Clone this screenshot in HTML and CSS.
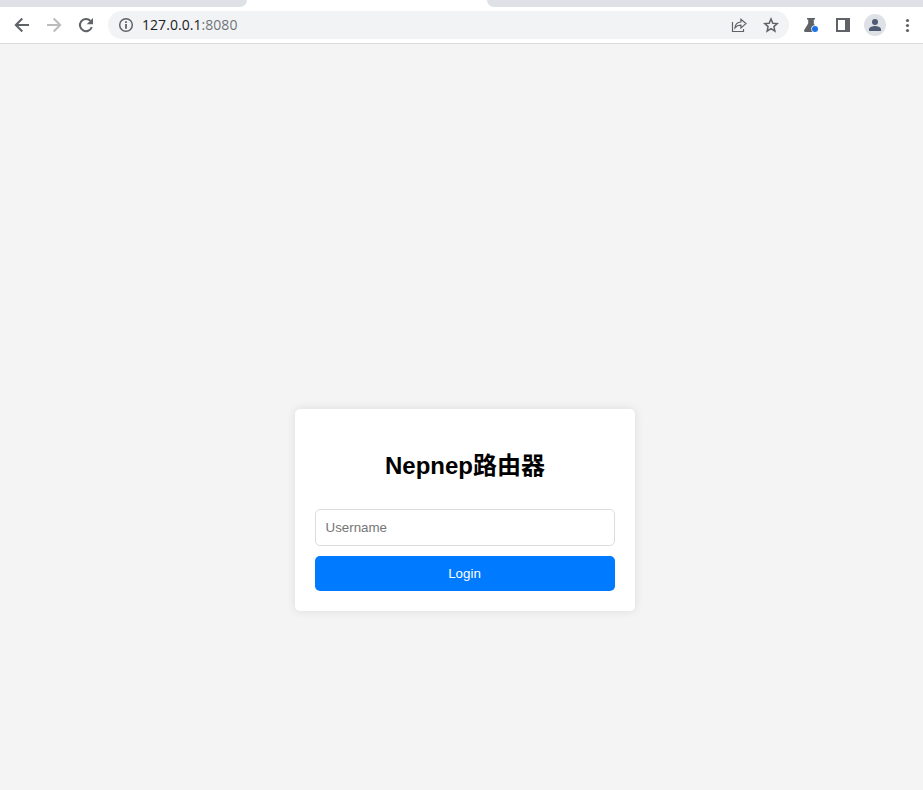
FILE: index.html
```html
<!DOCTYPE html>
<html lang="zh">
<head>
<meta charset="utf-8">
<title>Nepnep路由器</title>
<link rel="stylesheet" href="styles.css">
</head>
<body>
<div class="tabs"><div class="tab-left"></div><div class="tab-active"></div><div class="tab-right"></div></div>
<header class="toolbar">
  <nav class="nav">
    <svg class="icon" viewBox="0 0 16 16"><path d="M15 8H2M8.3 1.5L1.8 8l6.500 6.500" fill="none" stroke="#5f6368" stroke-width="2"/></svg>
    <svg class="icon" viewBox="0 0 16 16"><path d="M1 8h13M7.700 1.500L14.200 8l-6.500 6.500" fill="none" stroke="#babcbe" stroke-width="2"/></svg>
    <svg class="icon" viewBox="0 0 16 16"><path d="M13.800 10A6.100 6.100 0 1 1 12.500 3.900" fill="none" stroke="#5f6368" stroke-width="2"/><path d="M15 1v6.300H8.700z" fill="#5f6368"/></svg>
  </nav>
  <div class="address">
    <svg class="icon" viewBox="0 0 16 16"><circle cx="8" cy="8" r="6.300" fill="none" stroke="#5f6368" stroke-width="1.500"/><path d="M7.100 4.200h1.800v1.700H7.100zM7.100 7h1.800v4.800H7.100z" fill="#5f6368"/></svg>
    <span class="url">127.0.0.1<span class="port">:8080</span></span>
    <svg class="icon share" viewBox="0 0 16 16"><path d="M1.500 5v9.500h11V12M4 10.800C4.300 7.200 6.300 5.200 9.900 5V2.300L15 6.600l-5.100 4.300V8.200C7.200 8.100 5.500 8.900 4 10.800z" fill="none" stroke="#5f6368" stroke-width="1.200"/></svg>
    <svg class="icon" viewBox="0 0 16 16"><path d="M8 2l1.800 4.200 4.500.4-3.400 3 1 4.500L8 11.700l-3.900 2.400 1-4.500-3.400-3 4.500-.4z" fill="none" stroke="#5f6368" stroke-width="1.500"/></svg>
  </div>
  <div class="actions">
    <svg class="icon" viewBox="0 0 16 16"><path d="M4 1h8v1.600h-1.200v4L14.800 13c.5 1-.1 2-1.200 2H2.400c-1.100 0-1.700-1-1.200-2L5.200 6.600v-4H4z" fill="#5f6368"/><circle cx="12" cy="12" r="3.700" fill="#fff"/><circle cx="12" cy="12" r="3" fill="#1a73e8"/></svg>
    <svg class="icon" viewBox="0 0 16 16"><path fill-rule="evenodd" d="M1 1h14v14H1zM3 3v10h7V3z" fill="#5f6368"/></svg>
    <div class="avatar"><svg class="icon" viewBox="0 0 16 16"><circle cx="8" cy="5" r="3" fill="#4f5b73"/><path d="M2 14v-1.700c0-2.100 4-3.200 6-3.200s6 1.100 6 3.200V14z" fill="#4f5b73"/></svg></div>
    <svg class="icon" viewBox="0 0 16 16"><g fill="#5f6368"><circle cx="8.500" cy="3.500" r="1.600"/><circle cx="8.500" cy="8.500" r="1.600"/><circle cx="8.500" cy="13.500" r="1.600"/></g></svg>
  </div>
</header>
<main class="page">
  <form class="card">
    <h2 class="title">Nepnep路由器</h2>
    <input class="field" type="text" placeholder="Username">
    <button class="login" type="button">Login</button>
  </form>
</main>
</body>
</html>
```
FILE: styles.css
```css
* { box-sizing: border-box; }
body {
  margin: 0;
  height: 790px;
  overflow: hidden;
  display: flex;
  flex-direction: column;
  background: #f4f4f4;
  font-family: "Liberation Sans", "Noto Sans CJK SC", sans-serif;
}
.tabs { display: flex; height: 7px; flex: none; background: #fff; }
.tab-left { width: 247px; background: #dee1e6; border-bottom-right-radius: 7px; }
.tab-active { width: 240px; }
.tab-right { flex: 1; background: #dee1e6; border-bottom-left-radius: 7px; }
.toolbar {
  display: flex;
  align-items: center;
  flex: none;
  height: 37px;
  padding: 0 8px 0 14px;
  background: #fff;
  border-bottom: 1px solid #dadce0;
}
.icon { display: block; width: 16px; height: 16px; flex: none; }
.nav { display: flex; gap: 16px; width: 94px; }
.address {
  display: flex;
  align-items: center;
  width: 681px;
  height: 28px;
  padding: 0 10px;
  border-radius: 14px;
  background: #f1f3f4;
}
.url {
  margin-left: 8px;
  font: 14px/20px "Open Sans", sans-serif;
  letter-spacing: 0.05px;
  color: #202124;
}
.port { color: #70757a; }
.share { margin-left: auto; margin-right: 16px; }
.actions { display: flex; align-items: center; margin-left: 14px; }
.actions > .icon + .icon { margin-left: 16px; }
.avatar {
  display: flex;
  align-items: center;
  justify-content: center;
  width: 22px;
  height: 22px;
  margin: 0 13px;
  border-radius: 50%;
  background: #dee1e6;
}
.page {
  flex: 1;
  display: flex;
  justify-content: center;
  align-items: flex-start;
  padding: 365px 0 0 7px;
}
.card {
  display: flex;
  flex-direction: column;
  width: 340px;
  height: 202px;
  padding: 20px;
  background: #fff;
  border-radius: 5px;
  box-shadow: 0 0 10px rgba(0, 0, 0, .1);
}
.title {
  margin: 19px 0 25px;
  text-align: center;
  font-size: 24px;
  line-height: 36px;
  color: #000;
}
.field {
  height: 37px;
  margin: 0 0 10px;
  padding: 0 9.5px;
  border: 1px solid #ddd;
  border-radius: 5px;
  font: 13.333px "Liberation Sans", sans-serif;
}
.field::placeholder { color: #757575; }
.login {
  height: 35px;
  padding: 0 1px 0 0;
  border: 0;
  border-radius: 5px;
  background: #007bff;
  color: #fff;
  font: 13.333px "Liberation Sans", sans-serif;
}
```
